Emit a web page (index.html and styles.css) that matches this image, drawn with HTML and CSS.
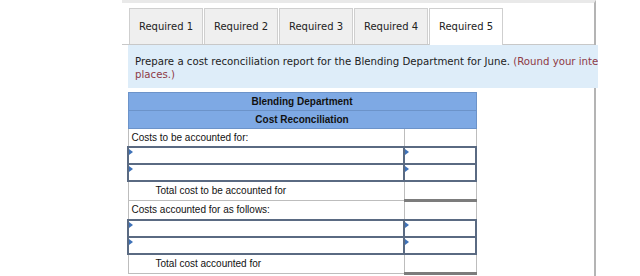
FILE: index.html
```html
<!DOCTYPE html>
<html lang="en">
<head>
  <meta charset="UTF-8" />
  <title>Cost Reconciliation</title>
  <link rel="stylesheet" href="styles.css">
</head>
<body>
  <div class="card">
    <div class="tabs">
      <div class="tab">Required 1</div>
      <div class="tab">Required 2</div>
      <div class="tab">Required 3</div>
      <div class="tab">Required 4</div>
      <div class="tab active">Required 5</div>
    </div>

    <div class="prompt">
      <p>Prepare a cost reconciliation report for the Blending Department for June. <span class="note">(Round your intermediate calculations to 2 decimal places.)</span></p>
    </div>

    <table class="report">
      <tr class="head"><th colspan="2">Blending Department</th></tr>
      <tr class="head"><th colspan="2">Cost Reconciliation</th></tr>
      <tr><td class="label">Costs to be accounted for:</td><td class="amt"></td></tr>
      <tr class="entry"><td class="label"></td><td class="amt"></td></tr>
      <tr class="entry"><td class="label"></td><td class="amt"></td></tr>
      <tr class="total"><td class="label">Total cost to be accounted for</td><td class="amt"></td></tr>
      <tr><td class="label">Costs accounted for as follows:</td><td class="amt"></td></tr>
      <tr class="entry"><td class="label"></td><td class="amt"></td></tr>
      <tr class="entry"><td class="label"></td><td class="amt"></td></tr>
      <tr class="total"><td class="label">Total cost accounted for</td><td class="amt"></td></tr>
    </table>
  </div>
</body>
</html>
```

FILE: styles.css
```css
html, body {
  margin: 0;
  padding: 0;
  background: white;
}

.card {
  margin-left: 122px;
  width: 474px;
  height: 276px;
  border-top: 3px solid #e9e9e9;
  border-right: 2px solid #b4b4b4;
  box-sizing: border-box;
}

.tabs {
  display: flex;
  gap: 1px;
  padding: 5px 0 0 7px;
  border-bottom: 1px solid #c8c8c8;
}

.tab {
  width: 72px;
  height: 35px;
  line-height: 35px;
  text-align: center;
  background: #efefef;
  border: 1px solid #cfcfcf;
  border-bottom: none;
  font-family: 'DejaVu Sans', Verdana, sans-serif;
  font-size: 10px;
  color: #222;
}

.tab.active {
  background: white;
  margin-bottom: -1px;
  height: 36px;
}

.prompt {
  margin-left: 6px;
  margin-right: -4px;
  height: 43px;
  background: #deedf9;
  overflow: hidden;
}

.prompt p {
  margin: 0;
  padding: 10px 0 0 7px;
  width: 660px;
  font-family: 'DejaVu Sans', Verdana, sans-serif;
  font-size: 10.2px;
  line-height: 13px;
  color: #222;
}

.note {
  color: #8e3a45;
}

.report {
  margin: 4px 0 0 5px;
  width: 350px;
  border-collapse: collapse;
  font-family: 'Liberation Sans', Arial, sans-serif;
  font-size: 10px;
  color: #111;
}

.report th {
  height: 17px;
  padding: 0;
  background: #7ea9e4;
  border: 1px solid #6c93c9;
  font-weight: bold;
}

.report td {
  height: 17px;
  padding: 0 3px;
  border: 1px solid #bdbdbd;
  line-height: 12px;
}

.report td.amt {
  width: 64px;
}

.entry td {
  position: relative;
  height: 15px;
  border: 2px solid #5a6a82;
}

.entry td::before {
  content: "";
  position: absolute;
  top: 1px;
  left: 0;
  border-left: 4px solid #3f72b8;
  border-top: 3px solid transparent;
  border-bottom: 3px solid transparent;
}

.total .label {
  padding-left: 27px;
}

.total .amt {
  border-bottom: 3px solid #7c7c7c;
}
```
